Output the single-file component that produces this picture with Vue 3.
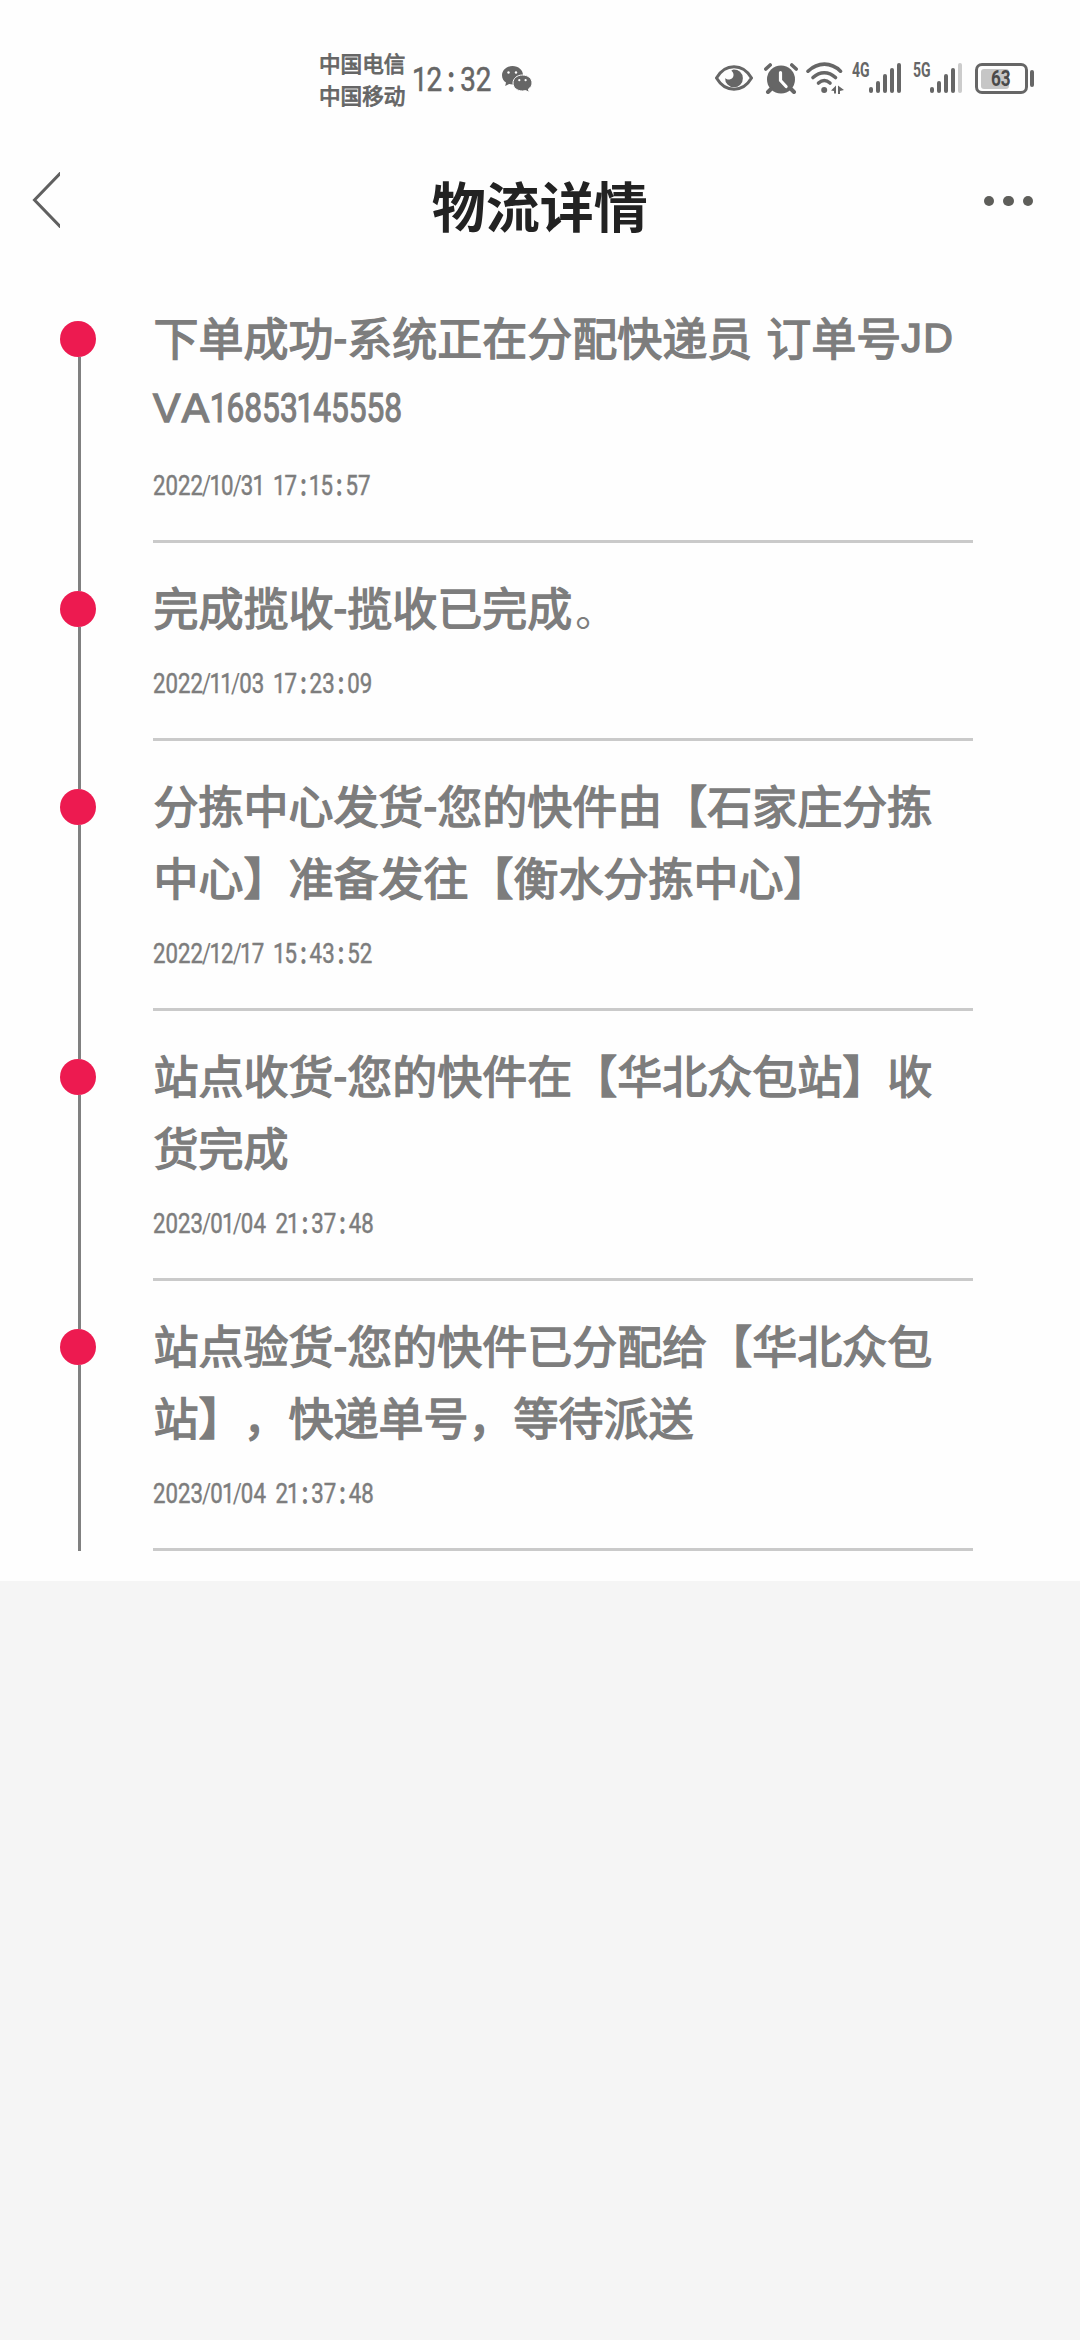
<script setup>
import { h } from 'vue'

const events = [
  { lines: ['下单成功-系统正在分配快递员 订单号JD', 'VA16853145558'], time: '2022/10/31 17:15:57' },
  { lines: ['完成揽收-揽收已完成。'], time: '2022/11/03 17:23:09' },
  { lines: ['分拣中心发货-您的快件由【石家庄分拣', '中心】准备发往【衡水分拣中心】'], time: '2022/12/17 15:43:52' },
  { lines: ['站点收货-您的快件在【华北众包站】收', '货完成'], time: '2023/01/04 21:37:48' },
  { lines: ['站点验货-您的快件已分配给【华北众包', '站】，快递单号，等待派送'], time: '2023/01/04 21:37:48' },
]

// Splits a line into runs of digits, latin characters, spaces and Chinese text.
function runs(line) {
  return (line.match(/\d+|[A-Z]+|-| |。|[^\dA-Z\- 。]+/g) || []).map((text) => ({
    text,
    kind: /^\d/.test(text)
      ? 'digits'
      : text === ' '
        ? 'gap'
        : text === '-'
          ? 'latin dash'
          : /^[A-Z]/.test(text)
            ? 'latin'
            : text === '。'
              ? 'stop'
              : 'han',
  }))
}

// Narrow numerals: every glyph is squeezed and placed on its own advance width.
function Narrow({ text, size, digit, colon, gap }) {
  const squeeze = digit / (size * 0.562)
  let pen = 0
  const glyphs = []
  for (const c of text) {
    const advance =
      c === '1' ? digit * 0.87 : c === '/' ? digit * 0.58 : c === ' ' ? gap : c === ':' ? colon : digit
    const natural = size * (c === '/' ? 0.412 : c === ':' ? 0.242 : c === ' ' ? 0.248 : 0.562) * squeeze
    const x = ((pen + (advance - natural) / 2) / squeeze).toFixed(2)
    glyphs.push(h('tspan', { x, 'stroke-width': c === ':' ? 1.8 : c === '/' ? 0 : undefined }, c))
    pen += advance
  }
  const height = Math.round(size * 0.72)
  return h('svg', { class: 'narrow', width: pen.toFixed(1), height }, [
    h('text', { y: height, 'font-size': size, transform: `scale(${squeeze.toFixed(4)} 1)` }, glyphs),
  ])
}
Narrow.props = ['text', 'size', 'digit', 'colon', 'gap']

const bars = [6, 12, 19, 25, 30]
</script>

<template>
  <div class="screen">
    <div class="sheet">
      <header class="status">
        <div class="carriers">
          <span>中国电信</span>
          <span>中国移动</span>
        </div>
        <div class="clock"><Narrow text="12:32" :size="34" :digit="15.6" :colon="18" :gap="8" /></div>
        <svg class="wechat" width="31" height="26" viewBox="0 0 31 26">
          <path d="M10.5 0C4.600 0 0 4.200 0 9.300c0 3.100 1.500 5.600 4 7.300L3.200 20l3.900-2c1.200.3 2.200.4 3.400.4C16.500 18.400 21 14.300 21 9.200S16.500 0 10.500 0Z" />
          <path class="front" d="M20.500 9c-5.500 0-9.500 3.500-9.500 8s4 8 9.500 8c1.100 0 2.100-.2 3-.5l3.800 1.800-.9-3.200c2.300-1.600 3.600-3.600 3.600-6.100 0-4.500-4-8-9.500-8Z" />
          <g fill="#fff"><circle cx="6.500" cy="6.500" r="1.200" /><circle cx="14" cy="6.500" r="1.200" /><circle cx="17.300" cy="14.200" r="1.100" /><circle cx="23.600" cy="14.200" r="1.100" /></g>
        </svg>

        <svg class="eye" width="38" height="26" viewBox="0 0 38 26">
          <path d="M1.500 13C5 7 11 1.800 19 1.800S33 7 36.500 13C33 19 27 24.200 19 24.200S5 19 1.500 13Z" fill="none" stroke="#666" stroke-width="3" />
          <path d="M18.500 4.500a8.900 8.900 0 1 1-8.400 8.500c1.200 1.200 2.800 1.800 4.600 1.400 3.500-.7 4.700-4.200 3.200-7-.4-.8-1-1.300-1.600-1.700.7-.6 1.300-1 2.200-1.200Z" />
        </svg>
        <svg class="alarm" width="34" height="31" viewBox="0 0 34 31">
          <circle cx="17" cy="16.500" r="14" />
          <path d="M1.800 6 6.200 2M32.200 6 27.800 2" fill="none" stroke="#666" stroke-width="3.600" stroke-linecap="round" />
          <path d="m7 26-3 3M27 26l3 3" fill="none" stroke="#666" stroke-width="4" stroke-linecap="round" />
          <path d="M16.500 9.500v8l5.600 6" fill="none" stroke="#fff" stroke-width="3.200" stroke-linecap="round" stroke-linejoin="round" />
        </svg>
        <svg class="wifi" width="39" height="32" viewBox="0 0 39 32">
          <g fill="none" stroke="#666" stroke-width="3.600" stroke-linecap="round">
            <path d="M2 9.200C12-.2 25-.2 34.500 9.200" />
            <path d="M7 15.500c7-6.400 15.500-6.400 22.500 0" />
            <path d="M12.500 21c3.800-3.300 7.700-3.300 11.500 0" />
          </g>
          <circle cx="18.200" cy="28" r="3" />
          <path d="m25 28.500 5-5v8h-2V29Zm7-5 6 4.500-4 1v3h-2Z" />
        </svg>
        <div class="cell">
          <b>4G</b>
          <i v-for="(b, n) in bars" :key="n" :style="{ height: b + 'px' }"></i>
        </div>
        <div class="cell second">
          <b>5G</b>
          <i v-for="(b, n) in bars" :key="n" :class="{ faint: n === 4 }" :style="{ height: b + 'px' }"></i>
        </div>
        <div class="battery"><div class="level"></div><span>63</span></div>
        <div class="cap"></div>
      </header>

      <nav class="bar">
        <svg class="back" width="28" height="56" viewBox="0 0 28 56">
          <path d="M29 .5 2.500 28 29 55.500" fill="none" stroke="#606060" stroke-width="3" />
        </svg>
        <h1>物流详情</h1>
        <div class="more"><i></i><i></i><i></i></div>
      </nav>

      <ol class="timeline">
        <li v-for="(e, n) in events" :key="n" class="event">
          <div class="rail">
            <div class="stem" :class="{ hidden: n === 0 }"></div>
            <div class="dot"></div>
            <div class="stem grow"></div>
          </div>
          <div class="body">
            <p v-for="line in e.lines" :key="line" class="line">
              <template v-for="(r, k) in runs(line)" :key="k">
                <Narrow v-if="r.kind === 'digits'" class="num" :text="r.text" :size="41" :digit="17.8" :colon="18" :gap="10" />
                <span v-else :class="r.kind">{{ r.text }}</span>
              </template>
            </p>
            <div class="time"><Narrow :text="e.time" :size="28" :digit="12.5" :colon="12.5" :gap="9.5" /></div>
          </div>
        </li>
      </ol>
    </div>
  </div>
</template>

<style>
body {
  background: #f5f5f5;
}
</style>

<style scoped>
.screen {
  width: 1080px;
  height: 2340px;
  overflow: hidden;
  background: #f5f5f5;
  font-family: "Noto Sans CJK SC", sans-serif;
  text-spacing-trim: space-all;
}
.sheet {
  height: 1581px;
  background: #fefefe;
}
.status {
  display: flex;
  align-items: flex-start;
  box-sizing: border-box;
  height: 153px;
  padding: 47px 0 0 319px;
  fill: #666;
  color: #666;
}
.carriers {
  display: flex;
  flex-direction: column;
  width: 87px;
  font-size: 21.6px;
  line-height: 32px;
  -webkit-text-stroke: 0.9px #666;
}
.clock {
  display: flex;
  width: 88px;
  margin: 20px 0 0 7px;
  stroke: #666;
  stroke-width: 0.6px;
}
.narrow {
  display: inline-block;
  overflow: visible;
  font-family: Roboto, sans-serif;
}
.wechat {
  margin: 19px 0 0 1px;
}
.front {
  stroke: #fefefe;
  stroke-width: 1px;
}
.eye {
  margin: 18px 0 0 182px;
}
.alarm {
  margin: 16px 0 0 11px;
}
.wifi {
  margin: 15px 0 0 8px;
}
.cell {
  display: flex;
  align-items: flex-end;
  gap: 3px;
  height: 46px;
  margin-left: 7px;
}
.cell.second {
  margin-left: 12px;
}
.cell b {
  width: 14px;
  align-self: flex-start;
  margin-top: 13px;
  font: bold 20px/20px Roboto, sans-serif;
  white-space: nowrap;
  transform: scaleX(0.7);
  transform-origin: left;
}
.cell i {
  width: 4px;
  border-radius: 2px;
  background: #666;
}
.cell i.faint {
  background: #ccc;
}
.battery {
  display: flex;
  align-items: center;
  box-sizing: border-box;
  width: 53px;
  height: 31px;
  margin: 16px 0 0 13px;
  padding-left: 3px;
  border: 3px solid #666;
  border-radius: 7px;
}
.level {
  width: 28px;
  height: 20px;
  border-radius: 3px;
  background: #c6c6c6;
}
.battery span {
  margin-left: -18px;
  font: bold 22px/22px Roboto, sans-serif;
  color: #4a4a4a;
  transform: scaleX(0.78);
  transform-origin: left;
}
.cap {
  width: 4px;
  height: 17px;
  margin: 23px 0 0 2px;
  border-radius: 2px;
  background: #666;
}
.bar {
  display: flex;
  align-items: center;
  justify-content: space-between;
  box-sizing: border-box;
  height: 96px;
  margin-bottom: 24px;
  padding: 0 47px 0 32px;
}
.back {
  margin: -2px 36px 0 0;
}
.bar h1 {
  margin: 7px 0 0;
  font-size: 54px;
  font-weight: bold;
  line-height: 80px;
  color: #222;
}
.more {
  display: flex;
  gap: 9px;
}
.more i {
  width: 10.5px;
  height: 10.5px;
  border-radius: 50%;
  background: #5e5e5a;
}
.timeline {
  margin: 0;
  padding: 0 107px 0 60px;
  list-style: none;
}
.event {
  display: flex;
}
.rail {
  display: flex;
  flex-direction: column;
  width: 93px;
}
.stem {
  width: 3px;
  height: 48px;
  margin-left: 18px;
  background: #808080;
}
.stem.hidden {
  visibility: hidden;
}
.stem.grow {
  flex: 1;
}
.dot {
  width: 36px;
  height: 36px;
  border-radius: 50%;
  background: #ed1a50;
}
.body {
  flex: 1;
  padding-top: 28px;
  border-bottom: 3px solid #cacaca;
  color: #7d7d7d;
  fill: #7d7d7d;
}
.line {
  display: flex;
  align-items: baseline;
  height: 72px;
  margin: 0;
  font-size: 45px;
  line-height: 72px;
  white-space: pre;
  -webkit-text-stroke: 1.4px #7d7d7d;
}
.line > * {
  flex: none;
}
.han:first-child {
  margin-left: 0.5px;
}
.stop {
  margin-left: 3px;
  font-size: 40px;
  -webkit-text-stroke-width: 0;
}
.latin {
  position: relative;
  top: -4px;
  font-family: "Liberation Sans", sans-serif;
  font-size: 41px;
  font-kerning: none;
  letter-spacing: 1.5px;
}
.latin.dash {
  letter-spacing: 0;
}
.latin:first-child,
.num {
  position: relative;
  top: -1px;
}
.num {
  stroke: #7d7d7d;
  stroke-width: 1.2px;
}
.gap {
  width: 14px;
}
.time {
  display: flex;
  align-items: center;
  height: 81px;
  padding-bottom: 14px;
  margin-top: -1px;
  margin-bottom: 1px;
  stroke: #7d7d7d;
  stroke-width: 0.5px;
}
</style>
